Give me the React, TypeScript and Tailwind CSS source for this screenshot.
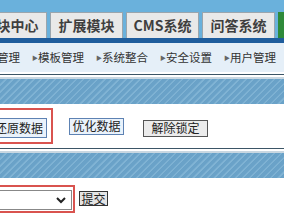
export default function App() {
  const tabs = ["模块中心", "扩展模块", "CMS系统", "问答系统"];
  const subs = ["模块管理", "模板管理", "系统整合", "安全设置", "用户管理"];
  const stripe =
    "bg-[#6aa2c8] bg-[repeating-linear-gradient(135deg,#6aa2c8_0px,#6aa2c8_3px,#80b3d4_4px,#80b3d4_5px)]";

  return (
    <div className="w-[284px] h-[215px] overflow-hidden bg-white font-['Noto_Sans_CJK_SC',sans-serif]">
      {/* top tabs */}
      <div className="h-[38px] bg-[#6ab1dc] flex items-end">
        <div className="flex gap-[3px] ml-[-26px] shrink-0">
          {tabs.map((t) => (
            <div
              key={t}
              className="h-[26px] w-[73px] shrink-0 bg-[#e9e9e9] border border-[#9aa5ad] border-b-0 flex items-center justify-center text-[14px] font-bold text-[#3f3f3f] whitespace-nowrap"
            >
              {t}
            </div>
          ))}
          <div className="h-[26px] w-[20px] shrink-0 bg-[#2e8a3a]" />
        </div>
      </div>
      <div className="h-[5px] bg-[#1f5d9d]" />

      {/* sub menu */}
      <div className="h-[29px] bg-[#e5eff8] flex items-center text-[11.5px] text-[#333] ml-[-26px]">
        {subs.map((s, i) => (
          <span key={s} className="flex items-center whitespace-nowrap shrink-0">
            {i > 0 && <span className="ml-[12px] w-[6px] text-[6px] text-[#666]">▶</span>}
            {s}
          </span>
        ))}
      </div>

      {/* section 1 */}
      <div className="h-[2px] bg-white" />
      <div className="h-[1px] bg-[#3b5566]" />
      <div className="h-[2px] bg-white" />
      <div className="h-[2px] bg-[#c9d7e1]" />
      <div className={`h-[25px] ${stripe}`} />
      <div className="h-[44px] flex items-center">
        <div className="border-[2px] border-[#d9534f] ml-[-15px] px-[4px] py-[4px] shrink-0">
          <button className="h-[20px] px-[3px] bg-[#eaf2fb] border border-[#5d82b3] text-[12px] leading-none text-[#222] whitespace-nowrap">
            还原数据
          </button>
        </div>
        <button className="ml-[16px] h-[17px] w-[55px] bg-[#eaf2fb] border border-[#5d82b3] text-[12px] leading-none text-[#222] whitespace-nowrap">
          优化数据
        </button>
        <button className="ml-[19px] mt-[4px] h-[17px] w-[65px] bg-[#ececec] border border-[#555] text-[12px] leading-none text-[#222] whitespace-nowrap">
          解除锁定
        </button>
      </div>

      {/* section 2 */}
      <div className="h-[1px] bg-[#3b5566]" />
      <div className="h-[2px] bg-white" />
      <div className="h-[2px] bg-[#c9d7e1]" />
      <div className={`h-[25px] ${stripe}`} />
      <div className="flex items-start pt-[7px]">
        <div className="border-[2px] border-[#d9534f] ml-[-6px] pl-[3px] pt-[3px] pr-[1px] pb-[1px] shrink-0">
          <div className="h-[20px] w-[73px] border border-[#888] bg-white flex items-center justify-end pr-[5px]">
            <svg width="10" height="7" viewBox="0 0 10 7">
              <path d="M1 1l4 4 4-4" fill="none" stroke="#222" strokeWidth="2" />
            </svg>
          </div>
        </div>
        <button className="ml-[4px] mt-[6px] h-[15px] w-[29px] bg-[#e4e4e4] border border-[#333] text-[12px] leading-none text-[#222] whitespace-nowrap">
          提交
        </button>
      </div>
    </div>
  );
}
